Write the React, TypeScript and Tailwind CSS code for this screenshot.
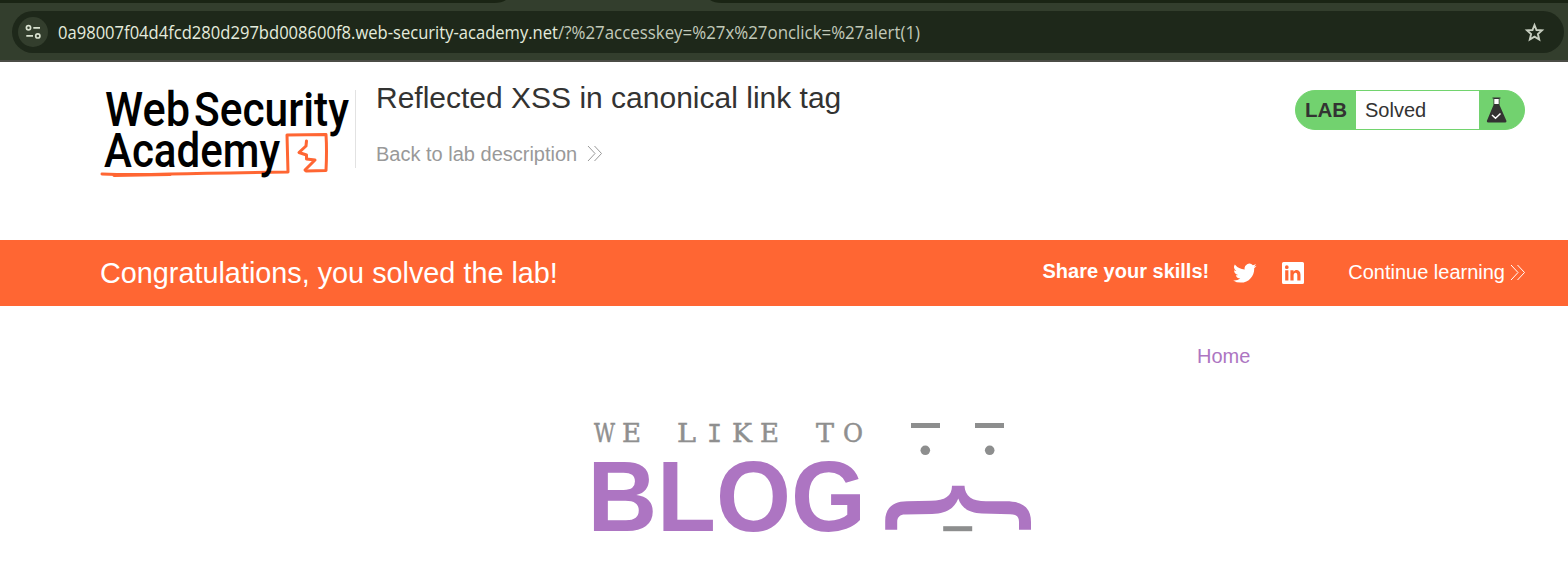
import React from 'react';

function Chevrons({ className }: { className: string }) {
  return (
    <svg width="16" height="17" viewBox="0 0 16 17" className={className} fill="none" stroke="currentColor" strokeWidth="1">
      <path d="M1 1 L8 8.500 L1 16 M7.500 1 L14.500 8.500 L7.500 16" />
    </svg>
  );
}

function BrowserBar() {
  return (
    <div className="h-[62px] bg-[#333e2d] border-b-2 border-[#4b4c46] flex flex-col">
      <div className="h-[3px] bg-[#1a2414] flex justify-start shrink-0">
        <svg width="1568" height="3" viewBox="0 0 1568 3">
          <path d="M494 3 Q502 3 506 0 H710 Q714 3 722 3 Z" fill="#333e2d" />
        </svg>
      </div>
      <div className="mt-2 ml-3 mr-1 h-[42px] shrink-0 rounded-full bg-[#1e281a] flex items-center pl-1.5 pr-[19px]">
        <div className="size-[30px] rounded-full bg-[#333e2d] flex items-center justify-center shrink-0">
          <svg width="18" height="18" viewBox="0 0 18 18" fill="none" stroke="#d9e2d0" strokeWidth="1.700">
            <circle cx="4.500" cy="4.800" r="2.100" />
            <path d="M9.300 4.800H16M2.300 12.900H9" />
            <circle cx="13.800" cy="12.900" r="2.100" />
          </svg>
        </div>
        <svg width="880" height="30" viewBox="0 0 880 30" className="ml-2 overflow-visible" fontSize="18.500" fontFamily="'Open Sans', 'Noto Sans', sans-serif">
          <text x="2" y="22" fill="#e4ebdc" textLength="500" lengthAdjust="spacingAndGlyphs">0a98007f04d4fcd280d297bd008600f8.web-security-academy.net</text>
          <text x="502" y="22" fill="#c1c9b9" textLength="362" lengthAdjust="spacingAndGlyphs">/?%27accesskey=%27x%27onclick=%27alert(1)</text>
        </svg>
        <svg width="22" height="22" viewBox="0 0 22 22" className="ml-auto" fill="none" stroke="#c6cdbf" strokeWidth="1.900">
          <path d="M11.500 4 L13.500 9 L19 9.400 L14.900 13 L16.200 18.500 L11.500 15.600 L6.800 18.500 L8.100 13 L4 9.400 L9.500 9 Z" />
        </svg>
      </div>
    </div>
  );
}

function AcademyLogo() {
  return (
    <svg width="255" height="100" viewBox="0 0 255 100" className="shrink-0 overflow-visible" fontFamily="Roboto, sans-serif" fontWeight="500" fontSize="47.500">
      <g fill="none" stroke="#ff6633" strokeWidth="3" strokeLinejoin="round" strokeLinecap="round">
        <path d="M2 84 Q30 85 70 84 T188 82 L187 45 L226 44.500 Q227 60 226 80.500 L206 81" />
        <path d="M206.500 51 L206 56 L199 62.500 L206.500 65 L206.500 69 L215 70 L205 80" />
        <path d="M14 85.500 L70 84.500" />
      </g>
      <text x="5" y="36" textLength="85" lengthAdjust="spacingAndGlyphs">Web</text>
      <text x="94" y="36" textLength="155" lengthAdjust="spacingAndGlyphs">Security</text>
      <text x="4" y="77" textLength="176" lengthAdjust="spacingAndGlyphs">Academy</text>
    </svg>
  );
}

function LabStatus() {
  return (
    <div className="mt-7 ml-auto w-[230px] h-10 rounded-[20px] border border-[#72d46e] bg-[#72d26f] overflow-hidden flex items-center text-[20px] text-[#333332] shrink-0">
      <div className="w-[60px] text-center font-bold text-[20.5px]">LAB</div>
      <div className="w-[123px] h-full bg-white flex items-center pl-[9px]">Solved</div>
      <svg width="22" height="28" viewBox="0 0 22 28" className="ml-[7px]">
        <path d="M7.500 2H13.500V9L20.500 25Q20.500 26.500 19 26.500H2.500Q.8 26.500 .8 25L7.500 9Z" fill="#333332" />
        <path d="M8.300 3H12.700V8H8.300Z" fill="#fff" />
        <path d="M6.500 2H14.500" stroke="#333332" />
        <path d="M6 19L9.500 22.300L14.500 17.500" stroke="#fff" strokeWidth="1.500" fill="none" />
      </svg>
    </div>
  );
}

function Header() {
  return (
    <header className="h-[178px] flex pl-[100px] pr-[43px]">
      <div className="mt-7 h-[78px] border-r border-[#e2e2e2] shrink-0 w-[256px]">
        <AcademyLogo />
      </div>
      <div className="ml-5 pt-[18px]">
        <h1 className="text-[30px] leading-9 text-[#333332] whitespace-nowrap">Reflected XSS in canonical link tag</h1>
        <a className="mt-[26px] flex items-center text-[20px] leading-6 text-[#999999] whitespace-nowrap">
          Back to lab description <Chevrons className="ml-2.5 mb-0.5" />
        </a>
      </div>
      <LabStatus />
    </header>
  );
}

function Banner() {
  return (
    <section className="h-[66px] bg-[#ff6633] text-white flex items-center pl-[100px] pr-[42px] whitespace-nowrap">
      <h4 className="text-[28.8px] pt-0.5">Congratulations, you solved the lab!</h4>
      <div className="ml-auto flex items-center text-[20px]">
        <span className="font-bold pb-1">Share your skills!</span>
        <svg width="24" height="24" viewBox="0 0 24 24" className="ml-6" fill="#fff">
          <path d="M23.6 4.8a9.500 9.500 0 0 1-2.700.8 4.700 4.700 0 0 0 2-2.600 9.600 9.600 0 0 1-3 1.150A4.800 4.800 0 0 0 11.700 8.500 13.600 13.600 0 0 1 1.800 3.500a4.800 4.800 0 0 0 1.500 6.400 4.800 4.800 0 0 1-2.200-.6 4.800 4.800 0 0 0 3.850 4.750 4.800 4.800 0 0 1-2.150.08 4.800 4.800 0 0 0 4.500 3.330A9.700 9.700 0 0 1 .2 19.450a13.600 13.600 0 0 0 7.400 2.170c8.900 0 13.900-7.500 13.600-14.300a9.800 9.800 0 0 0 2.400-2.520z" />
        </svg>
        <svg width="24" height="24" viewBox="0 0 24 24" className="ml-6 mb-px" fill="#fff">
          <path fillRule="evenodd" d="M2.500 1H21.500Q23 1 23 2.500V21.500Q23 23 21.500 23H2.500Q1 23 1 21.500V2.500Q1 1 2.500 1ZM4.200 9.300V19.500H7.400V9.300ZM5.800 4.300A1.850 1.850 0 1 0 5.800 8A1.850 1.850 0 1 0 5.800 4.300ZM9.400 9.300V19.500H12.600V14.400C12.600 11 16.300 10.900 16.300 14.200V19.500H19.500V13.700C19.500 8.500 14.400 7.900 12.500 10.700V9.300Z" />
        </svg>
        <a className="ml-[43px] pb-0.5 flex items-center">Continue learning <Chevrons className="ml-[5px]" /></a>
      </div>
    </section>
  );
}

const tagline = [
  { c: 'W', x: 594, w: 21 }, { c: 'E', x: 622, w: 19 }, { c: 'L', x: 677, w: 19 },
  { c: 'I', x: 707, w: 15, mono: true }, { c: 'K', x: 732, w: 20 }, { c: 'E', x: 760, w: 19 },
  { c: 'T', x: 816, w: 18 }, { c: 'O', x: 843, w: 20 },
];

function BlogLogo() {
  return (
    <svg width="460" height="140" viewBox="580 405 460 140" className="ml-[580px]">
      <g fill="#8f8f8f" stroke="#8f8f8f" strokeWidth="0.500" fontFamily="'DejaVu Serif', serif" fontSize="25.500">
        {tagline.map((l) => (
          <text
            key={l.x}
            x={l.x}
            y="442"
            textLength={l.w}
            lengthAdjust="spacingAndGlyphs"
            fontFamily={l.mono ? "'Liberation Mono', monospace" : undefined}
            fontSize={l.mono ? 28 : undefined}
          >
            {l.c}
          </text>
        ))}
      </g>
      <text x="587.500" y="531" fill="#ad75c2" fontFamily="'Liberation Sans', Arial, sans-serif" fontWeight="700" fontSize="100" textLength="278.500" lengthAdjust="spacingAndGlyphs">BLOG</text>
      <g fill="#8d8e8e">
        <rect x="911" y="423" width="29" height="5" />
        <rect x="975" y="423" width="29" height="5" />
        <circle cx="925.3" cy="450.300" r="4.800" />
        <circle cx="989.700" cy="450.300" r="4.800" />
        <rect x="943.200" y="526.200" width="29" height="5" />
      </g>
      <path fill="#ad75c2" d="M952 485.700H964.500C965 496 972 501.300 986 501.300H1006C1023 501.300 1031 508 1031 522V529.700H1019V522C1019 517 1016.500 514.300 1010 514.300L982 513.500C968 513 961 507 958.300 498.500C954 509 946 513.500 932 514L905 514.500C900 514.500 897.200 517 897.200 522V529.700H885.200V521C885.200 508 893 501.500 907 501.300L931 500.800C945 500.500 952 496 952 485.700Z" />
    </svg>
  );
}

export default function App() {
  return (
    <div className="w-[1568px] h-[569px] overflow-hidden bg-white font-['Liberation_Sans',Arial,sans-serif]">
      <BrowserBar />
      <Header />
      <Banner />
      <nav className="h-[99px] pt-[38px] pl-[1197px] text-[20px] leading-6 text-[#ad75c2]">Home</nav>
      <BlogLogo />
    </div>
  );
}
